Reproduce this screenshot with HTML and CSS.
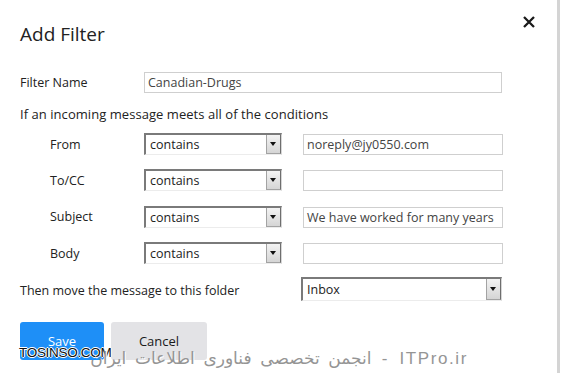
FILE: index.html
```html
<!DOCTYPE html>
<html>
<head>
<meta charset="utf-8">
<link rel="stylesheet" href="styles.css">
</head>
<body>
<div class="dialog">
  <div class="header">
    <h1 class="title">Add Filter</h1>
    <button class="close" aria-label="Close">
      <svg width="12" height="12" viewBox="0 0 12 12"><path d="M1 1 L11 11 M11 1 L1 11" stroke="#1a1a1a" stroke-width="2.3" fill="none"/></svg>
    </button>
  </div>

  <div class="name-row">
    <label class="name-label">Filter Name</label>
    <div class="input name-input">Canadian-Drugs</div>
  </div>

  <p class="intro">If an incoming message meets all of the conditions</p>

  <div class="conditions">
    <div class="cond">
      <span class="cond-label">From</span>
      <div class="select"><span class="select-value">contains</span><span class="select-btn"></span></div>
      <div class="input cond-input">noreply@jy0550.com</div>
    </div>
    <div class="cond">
      <span class="cond-label">To/CC</span>
      <div class="select"><span class="select-value">contains</span><span class="select-btn"></span></div>
      <div class="input cond-input"></div>
    </div>
    <div class="cond">
      <span class="cond-label">Subject</span>
      <div class="select"><span class="select-value">contains</span><span class="select-btn"></span></div>
      <div class="input cond-input">We have worked for many years</div>
    </div>
    <div class="cond">
      <span class="cond-label">Body</span>
      <div class="select"><span class="select-value">contains</span><span class="select-btn"></span></div>
      <div class="input cond-input"></div>
    </div>
  </div>

  <div class="folder-row">
    <span class="folder-label">Then move the message to this folder</span>
    <div class="select folder-select"><span class="select-value">Inbox</span><span class="select-btn"></span></div>
  </div>

  <div class="buttons">
    <button class="btn btn-save">Save</button>
    <button class="btn btn-cancel">Cancel</button>
  </div>

  <div class="watermark">
    <span class="wm-site">TOSINSO.COM</span>
    <span class="wm-text" dir="rtl">ITPro.ir - انجمن تخصصی فناوری اطلاعات ایران</span>
  </div>
</div>
</body>
</html>
```

FILE: styles.css
```css
html, body {
  margin: 0;
  padding: 0;
  background: #ffffff;
}

body {
  font-family: "Open Sans", "Noto Sans", sans-serif;
  font-size: 12.5px;
  color: #222222;
  width: 563px;
  height: 373px;
  overflow: hidden;
}

.dialog {
  position: relative;
  width: 560px;
  height: 373px;
  box-sizing: border-box;
  border-right: 3px solid #d4d4d4;
  padding: 0 0 0 20px;
  display: flex;
  flex-direction: column;
}

.header {
  display: flex;
  justify-content: space-between;
  align-items: flex-start;
  padding-right: 22px;
}

.title {
  margin: 21px 0 0 0;
  font-weight: 400;
  font-size: 19px;
  line-height: 26px;
  color: #222;
}

.close {
  margin-top: 16px;
  width: 12px;
  height: 12px;
  padding: 0;
  border: 0;
  background: transparent;
  display: flex;
}

.name-row {
  margin-top: 25px;
  display: flex;
  align-items: center;
}

.name-label {
  width: 124px;
}

.input {
  box-sizing: border-box;
  border: 1px solid #cfcfcf;
  background: #fff;
  color: #444;
  padding-left: 3px;
  white-space: nowrap;
  overflow: hidden;
}

.name-input {
  width: 358px;
  height: 21px;
  line-height: 19px;
}

.intro {
  margin: 11px 0 0 0;
  line-height: 20px;
  font-size: 13px;
  letter-spacing: 0.05px;
}

.conditions {
  margin-top: 9px;
  display: flex;
  flex-direction: column;
  gap: 14.4px;
}

.cond {
  display: flex;
  align-items: center;
  height: 22px;
}

.cond-label {
  width: 94px;
  padding-left: 30px;
}

.select {
  box-sizing: border-box;
  display: flex;
  width: 138px;
  height: 22px;
  border-top: 2px solid #7a7a7a;
  border-left: 2px solid #7a7a7a;
  border-right: 1px solid #d6d6d6;
  border-bottom: 1px solid #ececec;
  background: #fff;
}

.select-value {
  flex: 1;
  padding-left: 4px;
  line-height: 19px;
  color: #222;
}

.select-btn {
  position: relative;
  width: 15px;
  box-sizing: border-box;
  background: linear-gradient(#f3f3f3, #d5d5d5);
  border: 1px solid #a3a3a3;
  border-top: 0;
  border-right: 1px solid #6e6e6e;
}

.select-btn::after {
  content: "";
  position: absolute;
  left: 3px;
  top: 7px;
  border-left: 3.5px solid transparent;
  border-right: 3.5px solid transparent;
  border-top: 4px solid #111;
}

.cond-input {
  margin-left: 21px;
  width: 200px;
  height: 21px;
  line-height: 19px;
  margin-top: 1px;
}

.folder-row {
  margin-top: 13px;
  display: flex;
  align-items: center;
  height: 24px;
}

.folder-label {
  width: 281px;
  padding-top: 2px;
}

.folder-select {
  width: 201px;
  height: 24px;
}

.folder-select .select-value {
  line-height: 21px;
}

.folder-select .select-btn::after {
  top: 8px;
}

.buttons {
  margin-top: 21px;
  display: flex;
  gap: 7px;
}

.btn {
  height: 38px;
  border: 0;
  border-radius: 3px;
  font-family: "Open Sans", "Noto Sans", sans-serif;
  font-size: 13px;
  padding: 0 0 1px 0;
}

.btn-save {
  width: 84px;
  background: #1e8ff7;
  color: #fff;
}

.btn-cancel {
  width: 96px;
  background: #e3e3e6;
  color: #1a1a1a;
}

.watermark {
  position: absolute;
  left: 0;
  top: 343px;
  width: 563px;
  height: 26px;
}

.wm-site {
  position: absolute;
  left: 19px;
  top: 2px;
  font-family: "Liberation Sans", Arial, sans-serif;
  font-size: 13.5px;
  color: #111;
  letter-spacing: -0.3px;
  text-shadow: 1px 0 0 #fff, -1px 0 0 #fff, 0 1px 0 #fff, 0 -1px 0 #fff;
}

.wm-text {
  position: absolute;
  right: 95px;
  top: 5px;
  font-family: "Liberation Sans", "DejaVu Sans", sans-serif;
  font-size: 17px;
  letter-spacing: 1.6px;
  word-spacing: 4px;
  color: #959595;
  white-space: nowrap;
  text-shadow: 1px 1px 0 #fff;
}
```
